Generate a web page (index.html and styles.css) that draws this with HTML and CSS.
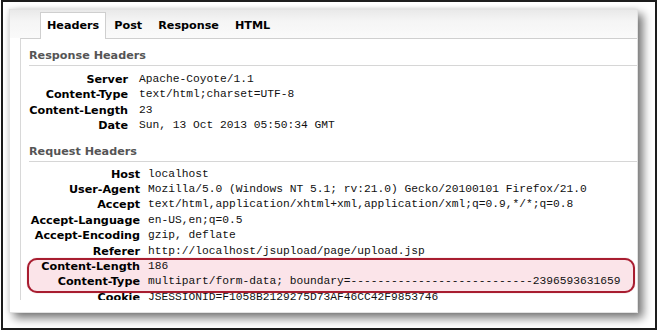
FILE: index.html
```html
<!DOCTYPE html>
<html lang="en">
<head>
  <meta charset="UTF-8" />
  <title>Headers</title>
  <link rel="stylesheet" href="styles.css">
</head>
<body>
  <div class="frame">
    <div class="panel">
      <div class="shot">
        <div class="tabs">
          <span class="tab active">Headers</span>
          <span class="tab">Post</span>
          <span class="tab">Response</span>
          <span class="tab">HTML</span>
        </div>

        <div class="content">
          <div class="mark"></div>

          <div class="section-title">Response Headers</div>
          <table class="headers response">
            <tr><th>Server</th><td>Apache-Coyote/1.1</td></tr>
            <tr><th>Content-Type</th><td>text/html;charset=UTF-8</td></tr>
            <tr><th>Content-Length</th><td>23</td></tr>
            <tr><th>Date</th><td>Sun, 13 Oct 2013 05:50:34 GMT</td></tr>
          </table>

          <div class="section-title">Request Headers</div>
          <table class="headers request">
            <tr><th>Host</th><td>localhost</td></tr>
            <tr><th>User-Agent</th><td>Mozilla/5.0 (Windows NT 5.1; rv:21.0) Gecko/20100101 Firefox/21.0</td></tr>
            <tr><th>Accept</th><td>text/html,application/xhtml+xml,application/xml;q=0.9,*/*;q=0.8</td></tr>
            <tr><th>Accept-Language</th><td>en-US,en;q=0.5</td></tr>
            <tr><th>Accept-Encoding</th><td>gzip, deflate</td></tr>
            <tr><th>Referer</th><td>http://localhost/jsupload/page/upload.jsp</td></tr>
            <tr><th>Content-Length</th><td>186</td></tr>
            <tr><th>Content-Type</th><td>multipart/form-data; boundary=---------------------------2396593631659</td></tr>
            <tr><th>Cookie</th><td>JSESSIONID=F1058B2129275D73AF46CC42F9853746</td></tr>
          </table>
        </div>
      </div>
    </div>
  </div>
</body>
</html>
```

FILE: styles.css
```css
body {
  margin: 0; padding: 0;
  background: #fff;
  font-family: "DejaVu Sans", Verdana, sans-serif;
}

.frame {
  margin-left: 1px;
  width: 646px; height: 319px;
  border: 2px solid #1c1c1c;
  background: #fff;
  padding: 7px 0 0 6px;
  overflow: hidden;
}

.panel {
  width: 627px;
  border: 1px solid #e2e2e2;
  background: #fff;
  padding-bottom: 12px;
  box-shadow: 5px 5px 9px rgba(0,0,0,0.55), -1px -1px 4px rgba(0,0,0,0.08);
}

.shot {
  height: 290px;
  overflow: hidden;
}

.tabs {
  display: flex; align-items: flex-end;
  height: 28px;
  padding-left: 30px;
  background: linear-gradient(#e9e9e9, #f5f5f5 40%, #fafafa);
  position: relative; z-index: 2;
}

.tab {
  padding: 0 8px;
  height: 25px; line-height: 25px;
  font-size: 11.2px; font-weight: bold;
  color: #000;
}
.tab.active {
  padding: 0 6px;
  background: #fff;
  border: 1px solid #cfcfcf; border-bottom: none;
  height: 26px;
  margin-bottom: -1px;
}

.content {
  margin-left: 10px;
  border-top: 1px solid #cfcfcf;
  border-left: 1px solid #d8d8d8;
  position: relative;
}

.mark {
  position: absolute;
  left: 6px; top: 219px;
  width: 608px; height: 35px;
  box-sizing: border-box;
  border: 2px solid #a81d30;
  border-radius: 10px;
  background: #fbe4e9;
  box-shadow: 0 0 1px rgba(168,29,48,0.6);
}

.section-title {
  position: relative;
  margin-left: 8px;
  padding-top: 9px;
  height: 17px; line-height: 16px;
  border-bottom: 1px solid #d6d6d6;
  font-size: 11.2px; font-weight: bold;
  color: #555;
}

.headers {
  position: relative;
  border-collapse: collapse;
  border-spacing: 0;
}
.headers th {
  padding: 0;
  text-align: right;
  font-size: 11.2px; font-weight: bold;
  color: #000;
  white-space: nowrap;
}
.headers td {
  font-family: "Liberation Mono", monospace;
  font-size: 11.25px;
  color: #111;
  white-space: nowrap;
}
.headers th, .headers td {
  height: 15.4px; line-height: 15.4px;
  vertical-align: middle;
}

.response { margin: 6px 0 1px; }
.response th { width: 107px; }
.response td { padding: 0 0 0 11px; }
.request { margin: 5px 0 0; }
.request th { width: 119px; }
.request td { padding: 0 0 0 8px; }
```
